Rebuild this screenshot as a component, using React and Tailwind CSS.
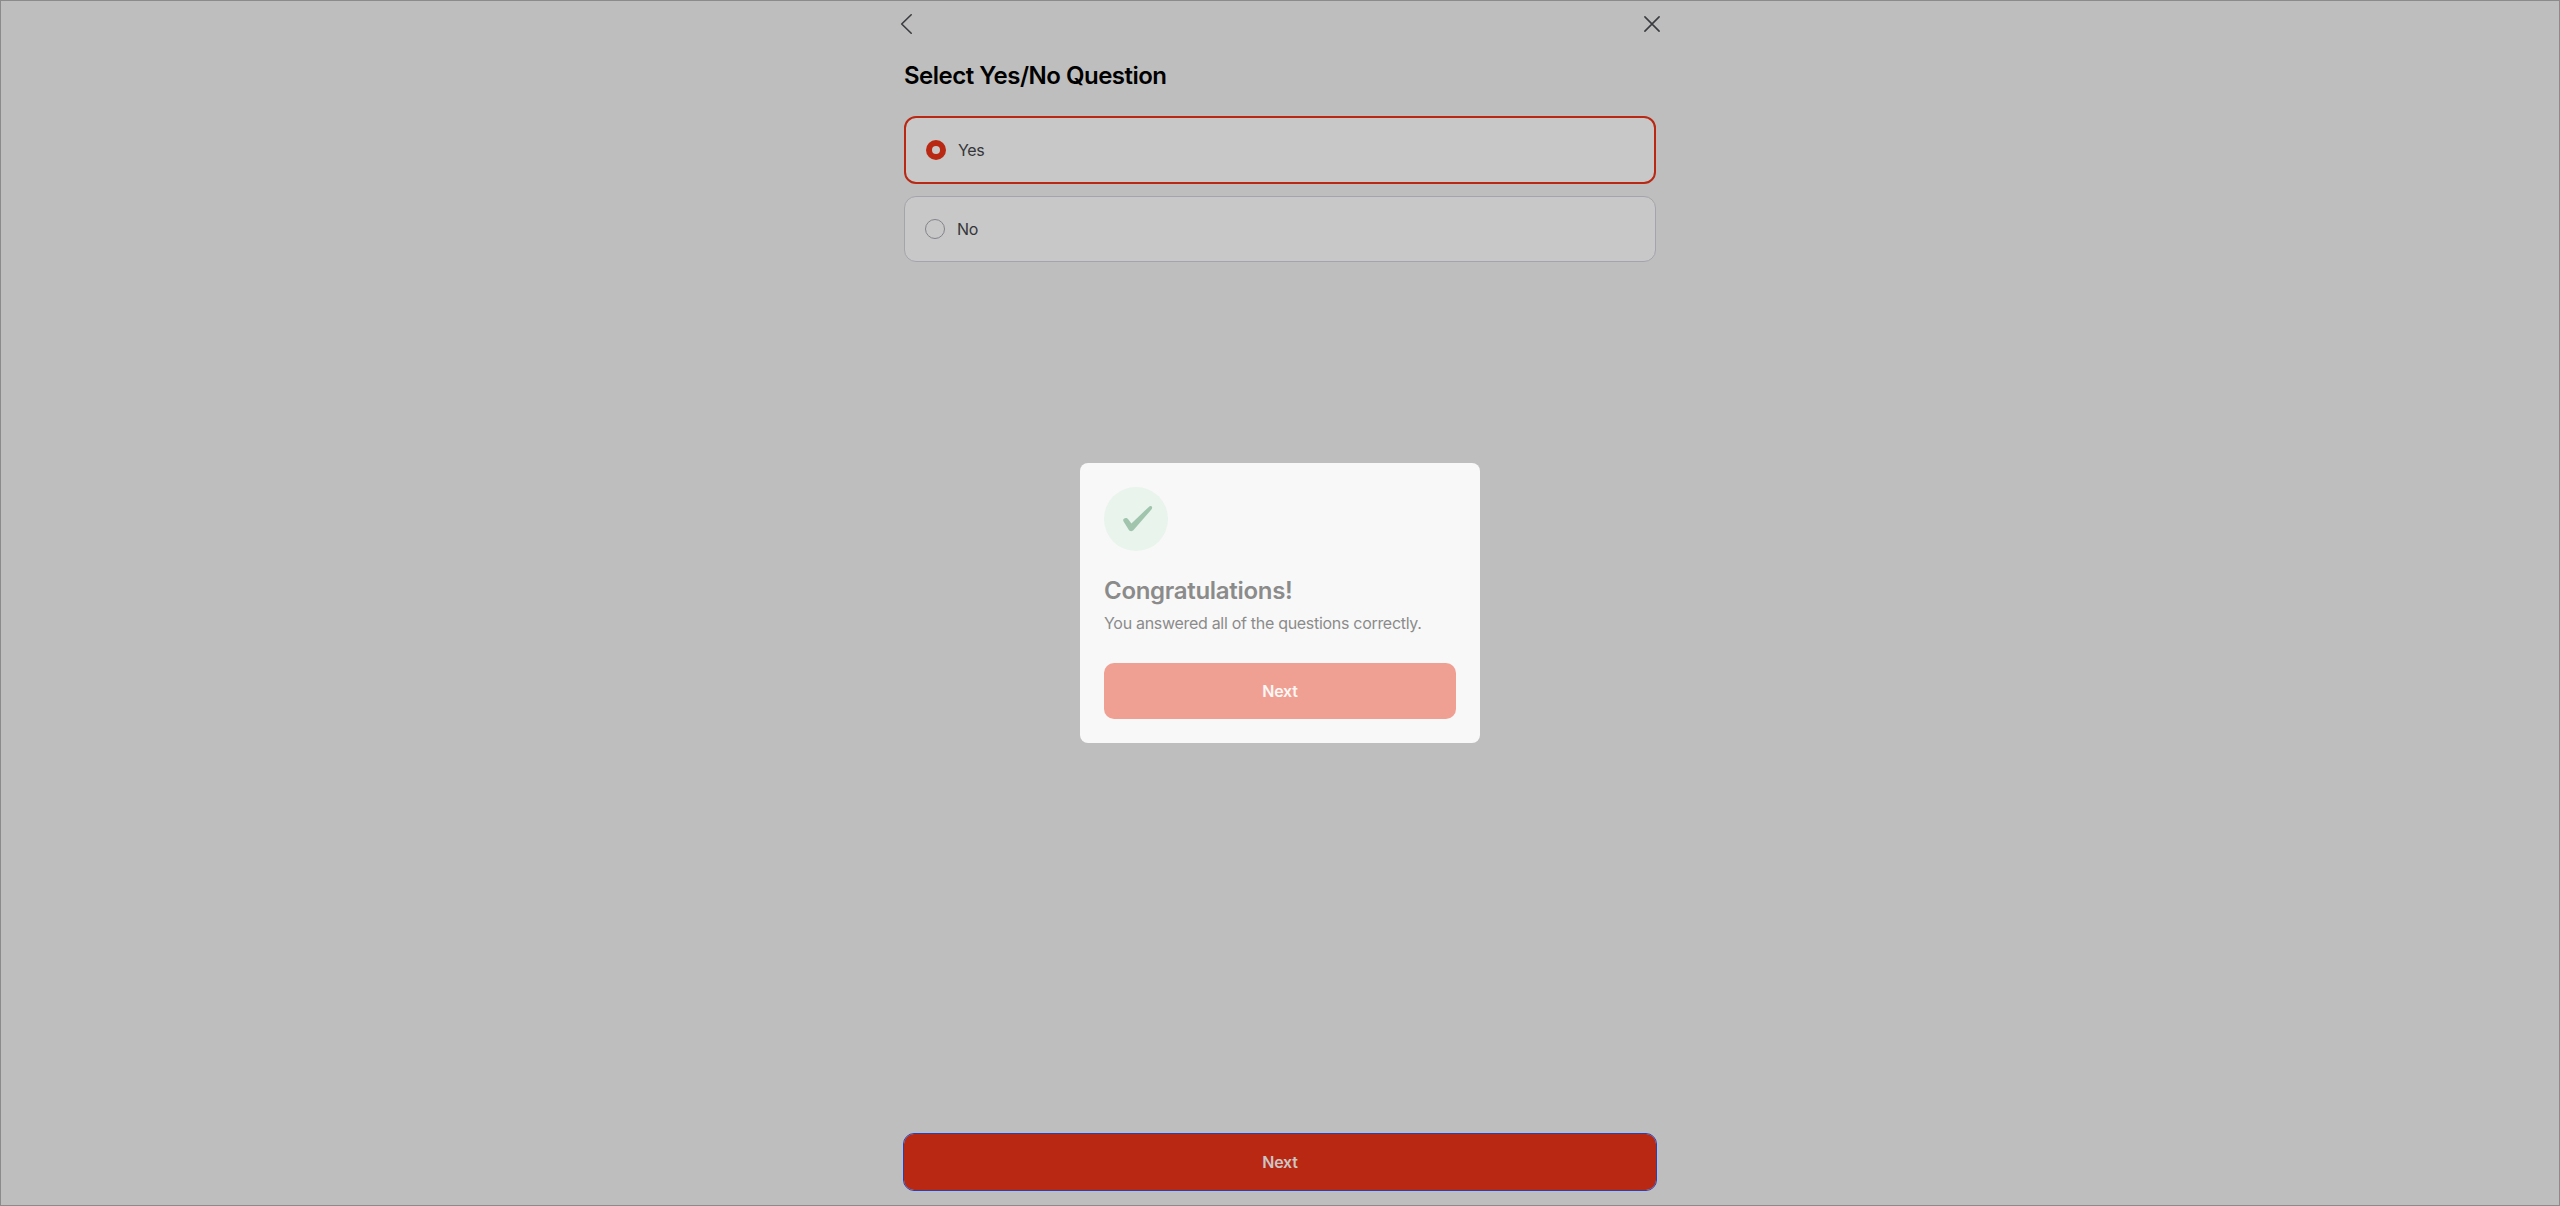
function BackIcon() {
  return (
    <svg className="size-6" viewBox="0 0 24 24" fill="none" stroke="#3a3b3f" strokeWidth="1.6" strokeLinecap="round" strokeLinejoin="round">
      <path d="M15.2 2.8 5.7 12l9.5 9.2" />
    </svg>
  );
}

function CloseIcon() {
  return (
    <svg className="size-6" viewBox="0 0 24 24" fill="none" stroke="#3a3b3f" strokeWidth="1.6" strokeLinecap="round">
      <path d="M4.9 4.9 19.1 19.1M19.1 4.9 4.9 19.1" />
    </svg>
  );
}

function Option({ label, selected }) {
  return (
    <div
      className={
        selected
          ? "flex h-[68px] items-center gap-3 rounded-xl border-2 border-[#b92813] bg-[#c8c8c8] px-5"
          : "flex h-[66px] items-center gap-3 rounded-xl border border-[#a4a4ab] bg-[#c8c8c8] px-5"
      }
    >
      <span
        className={
          selected
            ? "flex size-5 items-center justify-center rounded-full bg-[#b92813]"
            : "size-5 rounded-full border border-[#83838b]"
        }
      >
        {selected && <span className="size-2 rounded-full bg-[#c8c8c8]" />}
      </span>
      <span className="text-base tracking-[-0.3px] text-[#35363a]">{label}</span>
    </div>
  );
}

export default function App() {
  return (
    <div className="relative flex h-[1206px] w-full justify-center border border-[#8b8b8b] bg-[#bebebe] font-['Inter',sans-serif]">
      <div className="flex w-[752px] flex-col">
        <header className="-mx-2 mt-[11px] flex h-6 items-center justify-between">
          <BackIcon />
          <CloseIcon />
        </header>
        <h1 className="mt-6 text-2xl font-semibold tracking-[-0.5px] text-black">Select Yes/No Question</h1>
        <div className="mt-6 flex flex-col gap-3">
          <Option label="Yes" selected />
          <Option label="No" />
        </div>
        <button className="mt-auto mb-[15px] h-14 shrink-0 rounded-[10px] bg-[#b92813] text-base font-semibold tracking-[-0.2px] text-[#cbc6c5] outline-1 outline-[#2a40b8]">
          Next
        </button>
      </div>

      <div className="absolute inset-0 flex items-center justify-center">
        <div className="flex h-[280px] w-[400px] flex-col rounded-lg bg-[#f8f8f8] p-6">
          <span className="flex size-16 items-center justify-center rounded-full bg-[#e8f4ec]">
            <svg className="size-16" viewBox="0 0 64 64" fill="#a0c5ac">
              <path d="M19.6 34.4C17.8 31.8 22.1 29.4 24.2 32.2L27.4 36.5 44.8 19.9C46.9 17.8 49.4 20 47.4 22.5L30 42.6C28.3 44.8 26 45 24.4 42.3Z" />
            </svg>
          </span>
          <h2 className="mt-6 text-2xl font-semibold tracking-[-0.3px] text-[#8b8b8b]">Congratulations!</h2>
          <p className="mt-1 text-base tracking-[-0.3px] text-[#8b8b8b]">You answered all of the questions correctly.</p>
          <button className="mt-auto h-14 shrink-0 rounded-[10px] bg-[#f0a093] text-base font-semibold tracking-[-0.2px] text-[#fdf7f6]">
            Next
          </button>
        </div>
      </div>
    </div>
  );
}
